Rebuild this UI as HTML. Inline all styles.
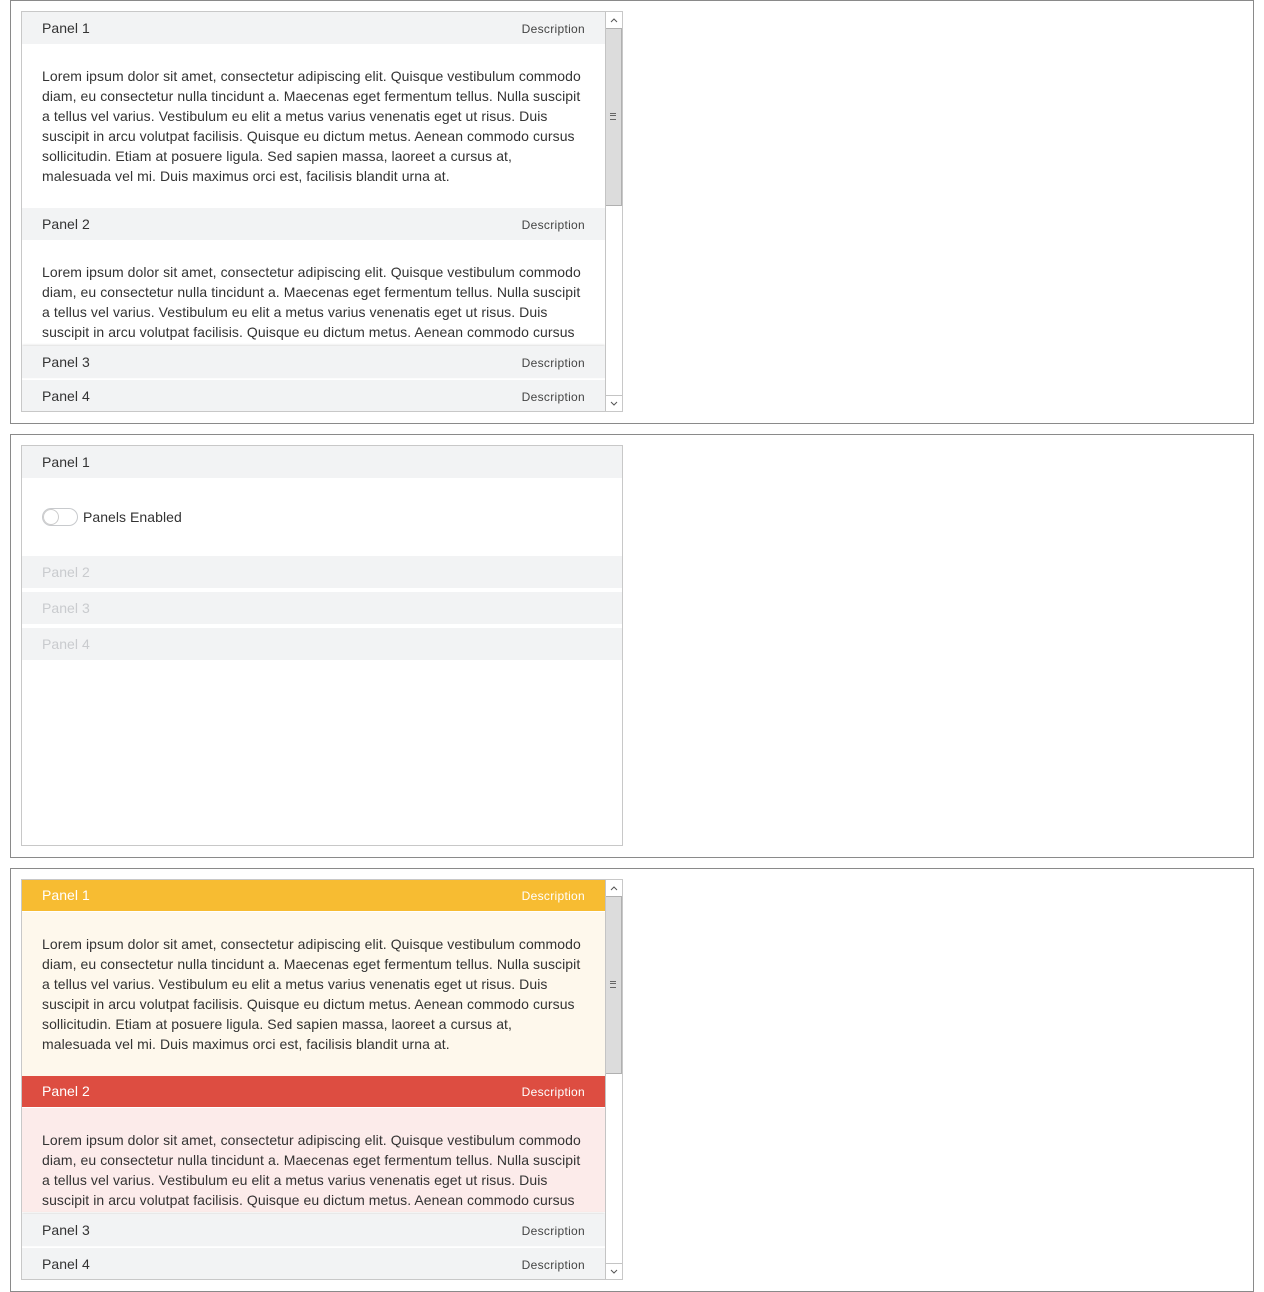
<!DOCTYPE html>
<html><head><meta charset="utf-8">
<style>
*{box-sizing:border-box;margin:0;padding:0}
body{width:1264px;height:1292px;background:#fff;font-family:"Liberation Sans",Arial,sans-serif;color:#333;position:relative;overflow:hidden}
.frame{position:absolute;left:10px;width:1244px;height:424px;border:1px solid #8a8a8a}
.w{position:absolute;left:10px;top:10px;width:602px;height:401px;border:1px solid #c8c8c8;overflow:hidden;background:#fff}
.hd{position:absolute;left:0;width:583px;height:32px;background:#f2f3f4;font-size:14px;line-height:32px;padding-left:20px;color:#333;letter-spacing:0.05px}
.hd .d{position:absolute;right:20px;top:1px;font-size:12px;color:#444;letter-spacing:0.3px}
.ct{position:absolute;left:0;width:583px;padding:22px 21px 0 20px;font-size:14px;line-height:20px;color:#333;overflow:hidden;letter-spacing:0.07px}
.sb{position:absolute;right:0;top:0;width:17px;height:399px;background:#fff;border-left:1px solid #c4c4c4}
.sb .up,.sb .dn{position:absolute;left:0;width:16px;height:16px}
.sb .up{top:0}.sb .dn{bottom:0;border-top:1px solid #c4c4c4}
.sb svg{position:absolute;left:3px;top:4px}
.sb .th{position:absolute;left:0;top:16px;width:16px;height:178px;background:#dcdcdc;border:1px solid #b0b0b0;border-left:none}
.sb .th:after{content:"";position:absolute;left:4px;top:84px;width:6px;height:5px;border-top:1px solid #666;border-bottom:1px solid #666}
.sb .th:before{content:"";position:absolute;left:4px;top:86px;width:6px;height:1px;background:#666}
.full{width:600px}
.dis{color:#c9cbce}
</style></head><body>

<div class="frame" style="top:0">
 <div class="w">
  <div class="hd" style="top:0">Panel 1<span class="d">Description</span></div>
  <div class="ct" style="top:32px;height:164px">Lorem ipsum dolor sit amet, consectetur adipiscing elit. Quisque vestibulum commodo diam, eu consectetur nulla tincidunt a. Maecenas eget fermentum tellus. Nulla suscipit a tellus vel varius. Vestibulum eu elit a metus varius venenatis eget ut risus. Duis suscipit in arcu volutpat facilisis. Quisque eu dictum metus. Aenean commodo cursus sollicitudin. Etiam at posuere ligula. Sed sapien massa, laoreet a cursus at, malesuada vel mi. Duis maximus orci est, facilisis blandit urna at.</div>
  <div class="hd" style="top:196px">Panel 2<span class="d">Description</span></div>
  <div class="ct" style="top:228px;height:104px">Lorem ipsum dolor sit amet, consectetur adipiscing elit. Quisque vestibulum commodo diam, eu consectetur nulla tincidunt a. Maecenas eget fermentum tellus. Nulla suscipit a tellus vel varius. Vestibulum eu elit a metus varius venenatis eget ut risus. Duis suscipit in arcu volutpat facilisis. Quisque eu dictum metus. Aenean commodo cursus</div>
  <div class="hd" style="top:334px;box-shadow:0 -1px 2px #ddd">Panel 3<span class="d">Description</span></div>
  <div class="hd" style="top:368px">Panel 4<span class="d">Description</span></div>
  <div class="sb"><div class="up"><svg width="10" height="8"><path d="M2 6 L5 3 L8 6" fill="none" stroke="#555" stroke-width="1"/></svg></div><div class="th"></div><div class="dn"><svg width="10" height="8"><path d="M2 2 L5 5 L8 2" fill="none" stroke="#555" stroke-width="1"/></svg></div></div>
 </div>
</div>

<div class="frame" style="top:434px">
 <div class="w">
  <div class="hd full" style="top:0">Panel 1</div>
  <div style="position:absolute;left:20px;top:62px;width:36px;height:18px;border:1px solid #c8cacd;border-radius:9px;background:#fff"><div style="position:absolute;left:0;top:0;width:16px;height:16px;border-radius:50%;border:1px solid #ccc;background:#fff"></div></div>
  <div style="position:absolute;left:61px;top:62px;font-size:14px;line-height:18px;color:#333;letter-spacing:0.05px">Panels Enabled</div>
  <div class="hd full dis" style="top:110px">Panel 2</div>
  <div class="hd full dis" style="top:146px">Panel 3</div>
  <div class="hd full dis" style="top:182px">Panel 4</div>
 </div>
</div>

<div class="frame" style="top:868px">
 <div class="w">
  <div class="hd" style="top:0;background:#f7bc32;color:#fff;height:31px;line-height:31px">Panel 1<span class="d" style="color:#fff">Description</span></div>
  <div class="ct" style="top:32px;height:164px;background:#fef8ec">Lorem ipsum dolor sit amet, consectetur adipiscing elit. Quisque vestibulum commodo diam, eu consectetur nulla tincidunt a. Maecenas eget fermentum tellus. Nulla suscipit a tellus vel varius. Vestibulum eu elit a metus varius venenatis eget ut risus. Duis suscipit in arcu volutpat facilisis. Quisque eu dictum metus. Aenean commodo cursus sollicitudin. Etiam at posuere ligula. Sed sapien massa, laoreet a cursus at, malesuada vel mi. Duis maximus orci est, facilisis blandit urna at.</div>
  <div class="hd" style="top:196px;background:#dd4d41;color:#fff;height:31px;line-height:31px">Panel 2<span class="d" style="color:#fff">Description</span></div>
  <div class="ct" style="top:228px;height:104px;background:#fcebea">Lorem ipsum dolor sit amet, consectetur adipiscing elit. Quisque vestibulum commodo diam, eu consectetur nulla tincidunt a. Maecenas eget fermentum tellus. Nulla suscipit a tellus vel varius. Vestibulum eu elit a metus varius venenatis eget ut risus. Duis suscipit in arcu volutpat facilisis. Quisque eu dictum metus. Aenean commodo cursus</div>
  <div class="hd" style="top:334px;box-shadow:0 -1px 2px #ddd">Panel 3<span class="d">Description</span></div>
  <div class="hd" style="top:368px">Panel 4<span class="d">Description</span></div>
  <div class="sb"><div class="up"><svg width="10" height="8"><path d="M2 6 L5 3 L8 6" fill="none" stroke="#555" stroke-width="1"/></svg></div><div class="th"></div><div class="dn"><svg width="10" height="8"><path d="M2 2 L5 5 L8 2" fill="none" stroke="#555" stroke-width="1"/></svg></div></div>
 </div>
</div>

</body></html>
